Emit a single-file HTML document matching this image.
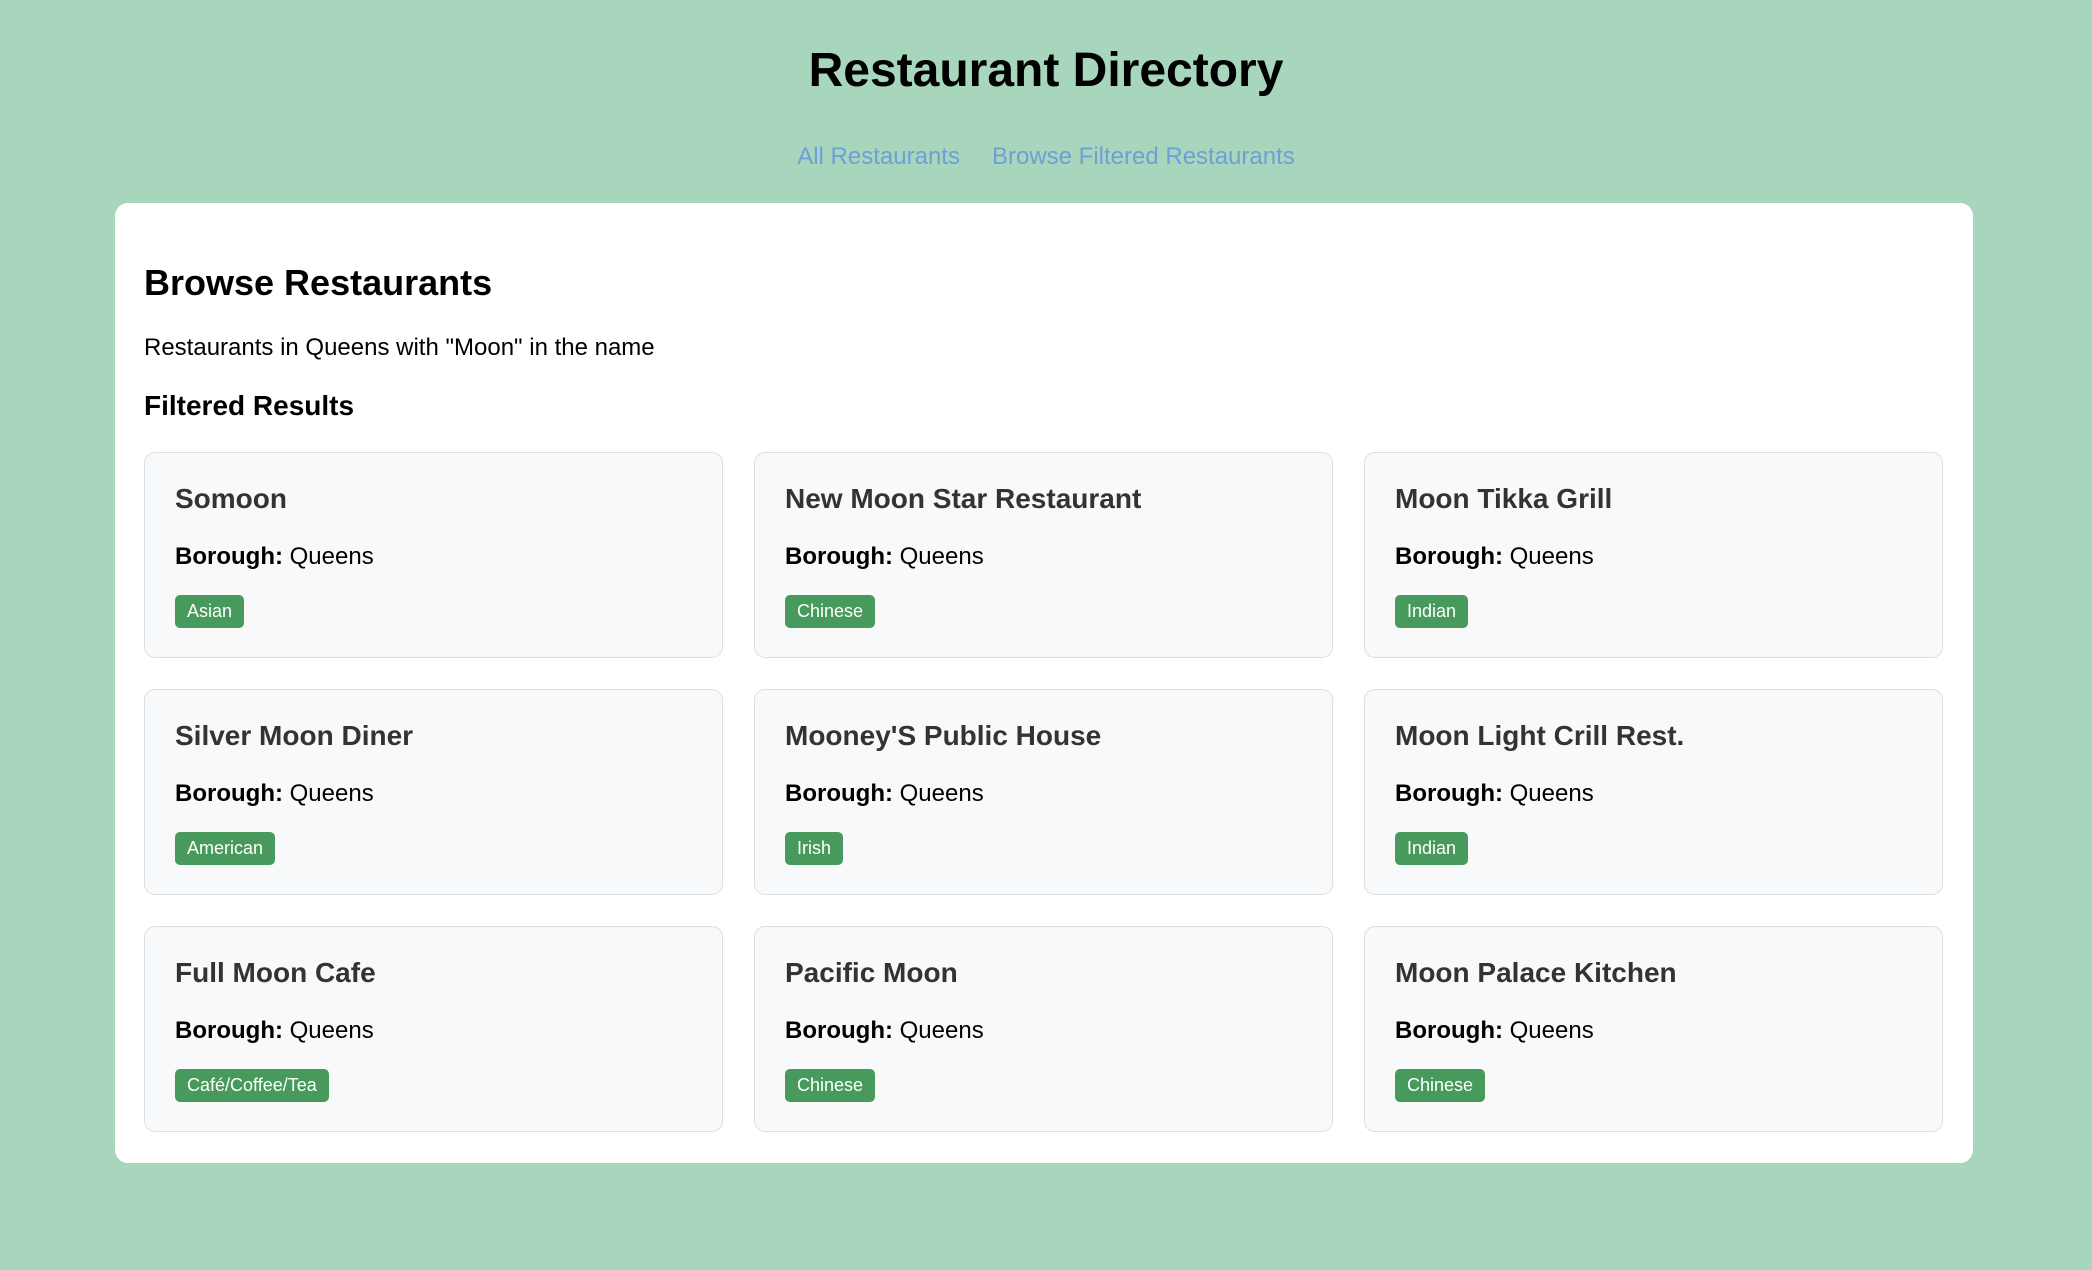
<!DOCTYPE html>
<html><head><meta charset="utf-8"><style>
*{box-sizing:border-box;margin:0;padding:0}
html,body{width:2092px;height:1270px;overflow:hidden}
body{background:#a8d6bd;font-family:"Liberation Sans",Arial,sans-serif;color:#000;position:relative}
h1{position:absolute;top:40px;left:0;width:100%;text-align:center;font-size:48px;line-height:62px;font-weight:bold}
.nav{position:absolute;top:142px;left:0;width:100%;text-align:center;font-size:24px;line-height:30px}
.nav a{color:#6e9fd6;text-decoration:none;margin:0 16px}
.box{position:absolute;left:115px;top:203px;width:1858px;height:960px;background:#fff;border-radius:13px}
h2{position:absolute;left:29px;top:58px;font-size:36px;line-height:44px;font-weight:bold}
.p{position:absolute;left:29px;top:130px;font-size:24px;line-height:30px}
h3{position:absolute;left:29px;top:186px;font-size:28px;line-height:34px;font-weight:bold}
.card{position:absolute;width:579px;height:206px;background:#f7f9fa;border:1px solid #dcdfe1;border-radius:11px}
.card .n{position:absolute;left:30px;top:29px;font-size:28px;line-height:34px;font-weight:bold;color:#333}
.card .b{position:absolute;left:30px;top:89px;font-size:24px;line-height:30px}
.card .t{position:absolute;left:30px;top:142px;height:33px;padding:0 12px;background:#479a5b;color:#fff;font-size:18px;line-height:33px;border-radius:5px}
</style></head><body>
<h1>Restaurant Directory</h1>
<div class="nav"><a>All Restaurants</a><a>Browse Filtered Restaurants</a></div>
<div class="box">
<h2>Browse Restaurants</h2>
<div class="p">Restaurants in Queens with "Moon" in the name</div>
<h3>Filtered Results</h3>
<div class="card" style="left:29px;top:249px"><div class="n">Somoon</div><div class="b"><b>Borough:</b> Queens</div><div class="t">Asian</div></div>
<div class="card" style="left:639px;top:249px"><div class="n">New Moon Star Restaurant</div><div class="b"><b>Borough:</b> Queens</div><div class="t">Chinese</div></div>
<div class="card" style="left:1249px;top:249px"><div class="n">Moon Tikka Grill</div><div class="b"><b>Borough:</b> Queens</div><div class="t">Indian</div></div>
<div class="card" style="left:29px;top:486px"><div class="n">Silver Moon Diner</div><div class="b"><b>Borough:</b> Queens</div><div class="t">American</div></div>
<div class="card" style="left:639px;top:486px"><div class="n">Mooney'S Public House</div><div class="b"><b>Borough:</b> Queens</div><div class="t">Irish</div></div>
<div class="card" style="left:1249px;top:486px"><div class="n">Moon Light Crill Rest.</div><div class="b"><b>Borough:</b> Queens</div><div class="t">Indian</div></div>
<div class="card" style="left:29px;top:723px"><div class="n">Full Moon Cafe</div><div class="b"><b>Borough:</b> Queens</div><div class="t">Café/Coffee/Tea</div></div>
<div class="card" style="left:639px;top:723px"><div class="n">Pacific Moon</div><div class="b"><b>Borough:</b> Queens</div><div class="t">Chinese</div></div>
<div class="card" style="left:1249px;top:723px"><div class="n">Moon Palace Kitchen</div><div class="b"><b>Borough:</b> Queens</div><div class="t">Chinese</div></div>
</div>
</body></html>
